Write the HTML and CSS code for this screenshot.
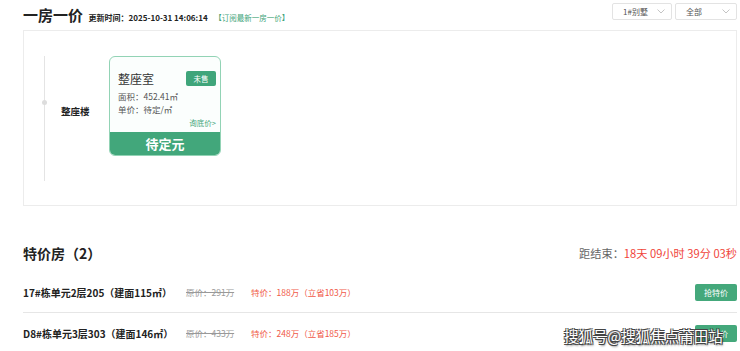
FILE: index.html
```html
<!DOCTYPE html>
<html>
<head>
    <meta charset="utf-8">
    <title>一房一价</title>
    <link rel="stylesheet" href="styles.css">
</head>
<body>
    <div class="page">
        <div class="topbar">
            <div class="heading">
                <span class="heading-title">一房一价</span>
                <span class="heading-time">更新时间：2025-10-31 14:06:14</span>
                <span class="heading-sub">【订阅最新一房一价】</span>
            </div>
            <div class="filters">
                <div class="select sel-a">1#别墅
                    <svg width="8" height="5" viewBox="0 0 8 5"><polyline points="0.5,0.5 4,4 7.5,0.5" fill="none" stroke="#c4c4c4" stroke-width="1"/></svg>
                </div>
                <div class="select sel-b">全部
                    <svg width="8" height="5" viewBox="0 0 8 5"><polyline points="0.5,0.5 4,4 7.5,0.5" fill="none" stroke="#c4c4c4" stroke-width="1"/></svg>
                </div>
            </div>
        </div>

        <div class="house-box">
            <div class="floor">
                <div class="floor-line"></div>
                <div class="floor-name">整座楼</div>
                <div class="card">
                    <div class="card-body">
                        <div class="card-head">
                            <span class="card-title">整座室</span>
                            <span class="badge">未售</span>
                        </div>
                        <div class="card-info">面积：452.41㎡</div>
                        <div class="card-info">单价：待定/㎡</div>
                        <div class="card-link">询底价&gt;</div>
                    </div>
                    <div class="card-price">待定元</div>
                </div>
            </div>
        </div>

        <div class="special-head">
            <span class="special-title">特价房（2）</span>
            <span class="countdown">距结束：<em>18天 09小时 39分 03秒</em></span>
        </div>

        <div class="special-row">
            <span class="room">17#栋单元2层205（建面115㎡）</span>
            <span class="old-price">原价：291万</span>
            <span class="new-price">特价：188万（立省103万）</span>
            <span class="buy-btn">抢特价</span>
        </div>
        <div class="special-row">
            <span class="room">D8#栋单元3层303（建面146㎡）</span>
            <span class="old-price">原价：433万</span>
            <span class="new-price">特价：248万（立省185万）</span>
            <span class="buy-btn">抢特价</span>
        </div>
    </div>
    <div class="watermark">搜狐号@搜狐焦点莆田站</div>
</body>
</html>
```

FILE: styles.css
```css
body{
    margin: 0;
    background: #fff;
    font-family: "Noto Sans CJK SC", "Liberation Sans", sans-serif;
    color: #333;
}
.page{
    margin-left: 23px;
    width: 714px;
}
.topbar{
    display: flex;
    justify-content: space-between;
    height: 30px;
}
.heading{
    margin-top: 3px;
    line-height: 22px;
    white-space: nowrap;
}
.heading-title{
    font-size: 15px;
    font-weight: bold;
    color: #222;
}
.heading-time{
    font-size: 8px;
    font-weight: bold;
    color: #222;
    margin-left: 2px;
}
.heading-sub{
    font-size: 7.5px;
    color: #3fa57a;
    margin-left: 3px;
}
.filters{
    display: flex;
    gap: 3px;
    margin-top: 3px;
}
.select{
    display: flex;
    align-items: center;
    justify-content: space-between;
    box-sizing: border-box;
    height: 17px;
    padding: 0 6px 0 10px;
    border: 1px solid #e3e3e3;
    border-radius: 2px;
    font-size: 8px;
    color: #555;
}
.sel-a{
    width: 60px;
}
.sel-b{
    width: 62px;
}
.house-box{
    box-sizing: border-box;
    height: 176px;
    border: 1px solid #ececec;
}
.floor{
    display: flex;
    margin: 25px 0 0 20px;
    height: 125px;
}
.floor-line{
    position: relative;
    width: 1px;
    background: #e4e4e4;
}
.floor-line::after{
    content: "";
    position: absolute;
    left: -2px;
    top: 44px;
    width: 5px;
    height: 5px;
    border-radius: 50%;
    background: #ddd;
}
.floor-name{
    width: 65px;
    padding-left: 16px;
    box-sizing: border-box;
    margin-top: 48px;
    font-size: 9.5px;
    font-weight: bold;
    color: #222;
    line-height: 14px;
}
.card{
    box-sizing: border-box;
    width: 112px;
    height: 100px;
    margin-left: -1px;
    border: 1px solid #92d3b5;
    border-radius: 6px;
    overflow: hidden;
    display: flex;
    flex-direction: column;
    background: #fbfefd;
}
.card-body{
    flex: 1;
    padding: 12px 4px 0 8px;
}
.card-head{
    display: flex;
    justify-content: space-between;
    align-items: center;
    height: 18px;
}
.card-title{
    font-size: 12px;
    color: #333;
}
.badge{
    width: 30px;
    height: 15px;
    line-height: 15px;
    text-align: center;
    background: #3fa57a;
    color: #fff;
    border-radius: 2px;
    font-size: 7.5px;
}
.card-info{
    font-size: 8.5px;
    color: #555;
    line-height: 13px;
}
.card-head + .card-info{
    margin-top: 3px;
}
.card-link{
    text-align: right;
    font-size: 7.5px;
    color: #3fa57a;
    line-height: 11px;
    margin-top: 1px;
}
.card-price{
    height: 23px;
    line-height: 23px;
    text-align: center;
    background: #42a77b;
    color: #fff;
    font-size: 13px;
    font-weight: bold;
}
.special-head{
    display: flex;
    justify-content: space-between;
    align-items: center;
    height: 20px;
    margin-top: 37px;
}
.special-title{
    font-size: 14px;
    font-weight: bold;
    color: #222;
}
.countdown{
    font-size: 11.2px;
    color: #666;
}
.countdown em{
    font-style: normal;
    color: #f0453a;
}
.special-row{
    display: flex;
    align-items: center;
    height: 40px;
    border-bottom: 1px solid #e6e6e6;
}
.special-head + .special-row{
    margin-top: 9px;
}
.special-row:last-child{
    border-bottom: none;
}
.room{
    font-size: 10px;
    font-weight: bold;
    color: #222;
    width: 163px;
}
.old-price{
    font-size: 8.5px;
    color: #999;
    text-decoration: line-through;
    width: 65px;
}
.new-price{
    font-size: 8.5px;
    color: #f05a48;
}
.buy-btn{
    margin-left: auto;
    width: 42px;
    height: 17px;
    line-height: 17px;
    text-align: center;
    background: #44a87b;
    color: #fff;
    border-radius: 2px;
    font-size: 8px;
}
.watermark{
    position: absolute;
    left: 564px;
    top: 325px;
    font-size: 14.5px;
    color: #fff;
    text-shadow: -1px -1px 0 #444, 1px -1px 0 #444, -1px 1px 0 #444, 1px 1px 0 #444, 1px 2px 2px rgba(0,0,0,.5);
}
```
